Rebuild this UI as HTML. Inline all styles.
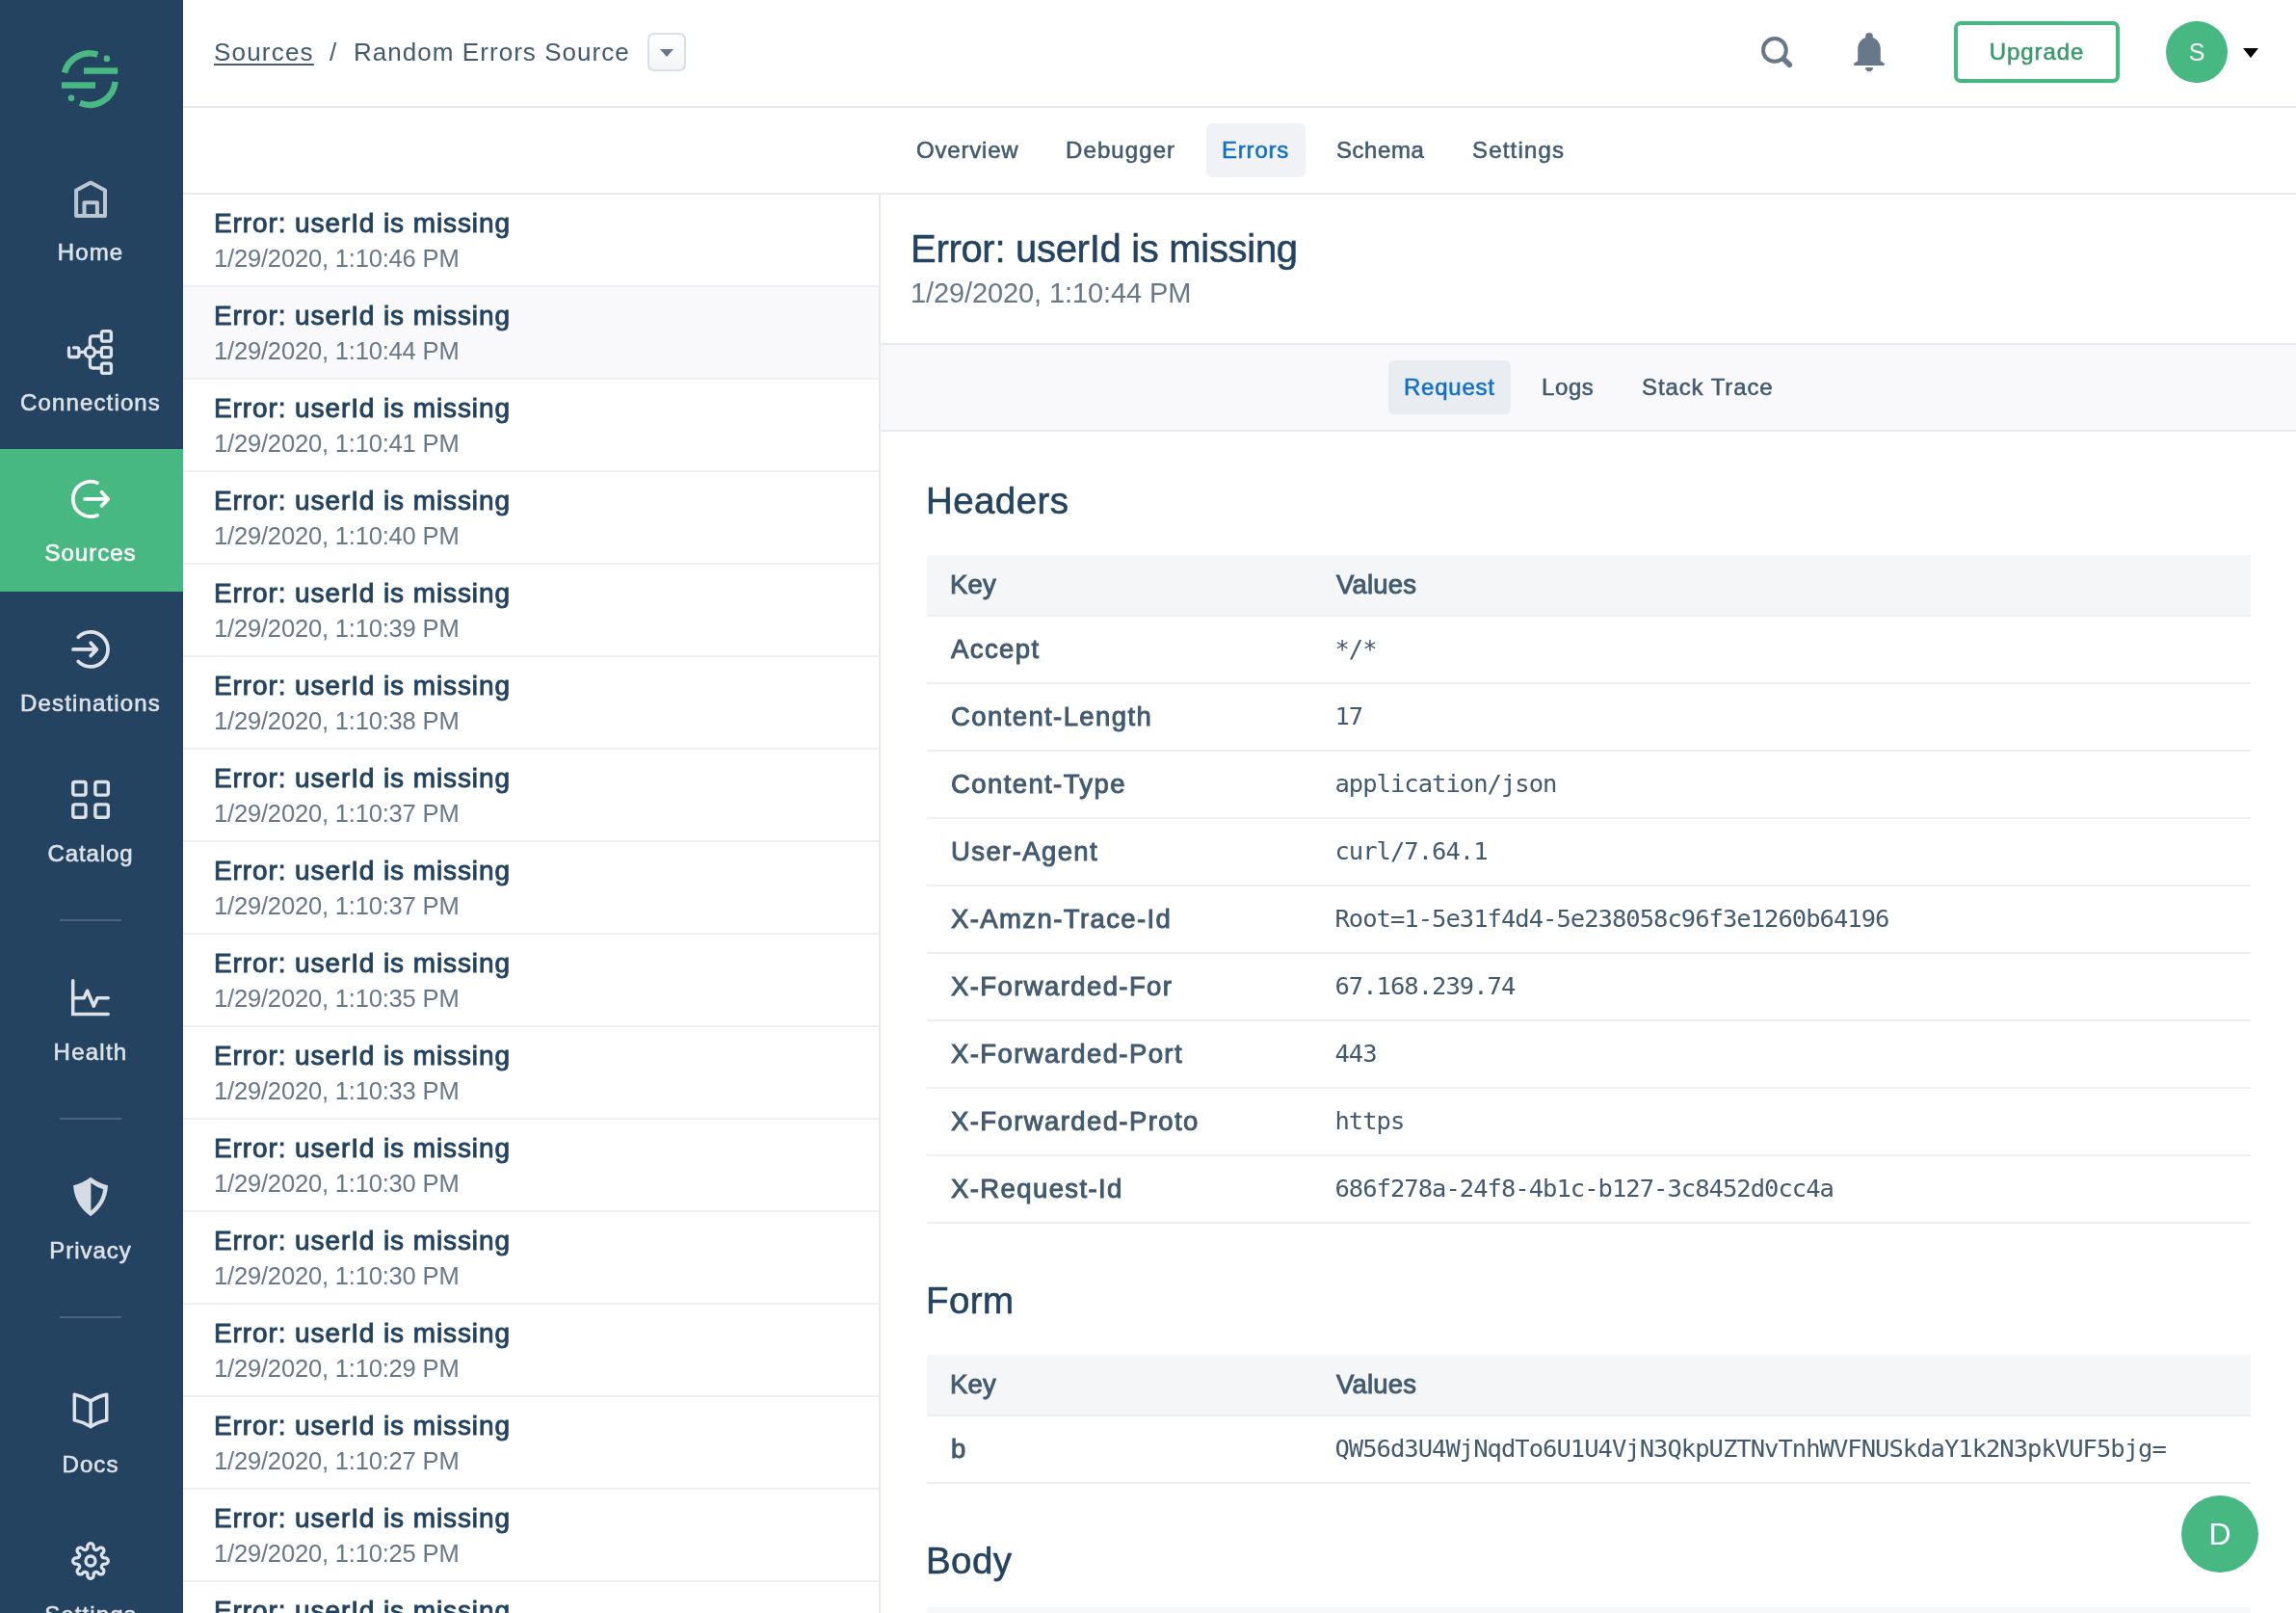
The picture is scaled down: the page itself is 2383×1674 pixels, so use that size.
<!DOCTYPE html>
<html lang="en"><head><meta charset="utf-8"><title>Random Errors Source - Errors</title>
<style>
*{box-sizing:border-box;margin:0;padding:0}
html,body{width:2383px;height:1674px;overflow:hidden;background:#fff}
body{position:relative;font-family:"Liberation Sans",Arial,sans-serif;color:#425a70;-webkit-font-smoothing:antialiased}
#side,#top,#tabs,#list,#det,#fab{will-change:transform}
#side{position:absolute;left:0;top:0;width:190px;height:1674px;background:#234361;overflow:hidden}
#side svg{position:absolute;left:0;top:0}
.nav{position:absolute;left:0;width:190px;height:148px;text-align:center;color:#dde2e8;font-size:24px;font-weight:400;-webkit-text-stroke:0.6px #dde2e8}
.nav span{position:absolute;left:-2px;right:0;top:92px;line-height:32px}
.nav.act{background:#47b881;color:#fff;-webkit-text-stroke-color:#fff}
.sdiv{position:absolute;left:62px;width:64px;height:2px;background:#4a6480}
#top{position:absolute;left:190px;top:0;width:2193px;height:112px;border-bottom:2px solid #e6e9ed;background:#fff}
#crumb span,#crumb a{position:absolute;top:36px;font-size:26px;line-height:36px;color:#425a70;white-space:nowrap}
#crumb a{color:#425a70;text-decoration:underline;text-decoration-thickness:2px;text-underline-offset:3px}
#dd{position:absolute;left:482px;top:34px;width:40px;height:40px;border:2px solid #d9dee4;border-radius:7px;background:linear-gradient(#fff,#f4f5f7)}
#dd i{position:absolute;left:11px;top:15px;border-left:7px solid transparent;border-right:7px solid transparent;border-top:8px solid #66788a}
#upg{position:absolute;left:1838px;top:22px;width:172px;height:64px;border:4px solid #47b881;border-radius:7px;color:#37996b;font-size:24px;line-height:56px;text-align:center;-webkit-text-stroke:0.5px #37996b;letter-spacing:0.9px}
#av{position:absolute;left:2058px;top:22px;width:64px;height:64px;border-radius:50%;background:#47b881;color:#fff;font-size:25px;line-height:64px;text-align:center}
#avc{position:absolute;left:2138px;top:50px;border-left:8.5px solid transparent;border-right:8.5px solid transparent;border-top:10px solid #000}
#tabs{position:absolute;left:190px;top:112px;width:2193px;height:90px;border-bottom:2px solid #e6e9ed;background:#fff}
.tab{position:absolute;top:16px;height:56px;line-height:56px;padding:0 16px;border-radius:6px;font-size:24px;color:#425a70;-webkit-text-stroke:0.55px #425a70;white-space:nowrap}
.tab.on{background:#f1f2f5;color:#1070ca;-webkit-text-stroke-color:#1070ca}
#list{position:absolute;left:190px;top:202px;width:724px;height:1472px;border-right:2px solid #e6e9ed;overflow:hidden;background:#fff}
.row{height:96px;border-bottom:2px solid #edf0f2;padding:12px 0 0 32px}
.row.sel{background:#f9f9fb}
.rt{font-size:28px;line-height:36px;color:#234361;-webkit-text-stroke:0.9px #234361;letter-spacing:0.9px;white-space:nowrap}
.rd{font-size:25.5px;line-height:36px;color:#66788a;letter-spacing:-0.17px;white-space:nowrap;margin-top:0px}
#det{position:absolute;left:914px;top:202px;width:1469px;height:1472px;overflow:hidden;background:#fff}
#dh{height:156px;border-bottom:2px solid #e6e9ed;padding:32px 0 0 31px}
#dh h1{font-size:40px;line-height:48px;font-weight:400;color:#234361;-webkit-text-stroke:0.5px #234361;letter-spacing:-0.3px;white-space:nowrap}
#dh p{font-size:29px;line-height:40px;color:#66788a;letter-spacing:-0.1px;white-space:nowrap;margin-top:2px}
#sub{position:relative;height:90px;border-bottom:2px solid #e6e9ed;background:#f9f9fb}
#sub .tab.on{background:#e9edf1}
#body{padding:0 47px 0 48px}
h2{font-size:38.5px;line-height:48px;font-weight:400;color:#234361;-webkit-text-stroke:0.6px #234361;letter-spacing:0.4px;margin-left:-1px;position:relative;top:2px}
.th,.tr{display:flex;align-items:center}
.th{height:64px;background:#f5f6f7;border-bottom:2px solid #edf0f2;font-size:27.5px;color:#425a70;-webkit-text-stroke:0.95px #425a70;letter-spacing:0.2px}
.tr{height:70px;border-bottom:2px solid #edf0f2}
.th div:first-child,.k{width:425px;padding-left:24px}
.k{font-size:27.5px;color:#425a70;-webkit-text-stroke:0.95px #425a70;letter-spacing:1.4px;text-indent:1px;white-space:nowrap}
.v{font-family:"DejaVu Sans Mono","Liberation Mono",monospace;font-size:25.5px;letter-spacing:-0.98px;color:#425a70;white-space:nowrap;position:relative;top:-1px;left:-1.5px}
#fab{position:absolute;left:2264px;top:1552px;width:80px;height:80px;border-radius:50%;background:#47b881;color:#fff;font-size:32px;line-height:80px;text-align:center}
</style></head><body>
<div id="side">
<div class="nav" style="top:154px"><span style="letter-spacing:1.1px">Home</span></div>
<div class="nav" style="top:310px"><span style="letter-spacing:1.15px">Connections</span></div>
<div class="nav act" style="top:466px"><span style="letter-spacing:1.0px">Sources</span></div>
<div class="nav" style="top:622px"><span style="letter-spacing:1.15px">Destinations</span></div>
<div class="nav" style="top:778px"><span style="letter-spacing:0.9px">Catalog</span></div>
<div class="nav" style="top:984px"><span style="letter-spacing:1.25px">Health</span></div>
<div class="nav" style="top:1190px"><span style="letter-spacing:1.0px">Privacy</span></div>
<div class="nav" style="top:1412px"><span style="letter-spacing:1.05px">Docs</span></div>
<div class="nav" style="top:1568px"><span style="letter-spacing:1.1px">Settings</span></div>

<div class="sdiv" style="top:954px"></div><div class="sdiv" style="top:1160px"></div><div class="sdiv" style="top:1366px"></div>
<svg width="190" height="1674" viewBox="0 0 190 1674" fill="none" stroke-linecap="round" stroke-linejoin="round">
<!-- logo -->
<g stroke="#49b882" stroke-width="6.5" stroke-linecap="butt">
<path d="M67.0 75.5A26.75 26.75 0 0 1 101.3 56.6"/>
<path d="M119.6 84.8A26.75 26.75 0 0 1 83 106.8"/>
<path d="M87 73.5H122.2M63.9 88.5H99"/>
</g>
<circle cx="110.9" cy="60.9" r="3.3" fill="#49b882"/><circle cx="74" cy="101.8" r="3.3" fill="#49b882"/>
<!-- home -->
<g stroke="#bcc6d1" stroke-width="4" stroke-linejoin="round">
<path d="M79.1 224V197.6L94.1 189.4L109 197.6V224Z"/><path d="M87.5 224V210.2H100.9V224"/>
</g>
<g stroke="#dde2e8" stroke-width="3.3">
<!-- connections -->
<rect x="105.4" y="343.7" width="10" height="10.5" rx="2"/><rect x="105.4" y="360.6" width="10" height="10" rx="2"/><rect x="105.4" y="377.2" width="10" height="10.2" rx="2"/>
<circle cx="93.4" cy="365.4" r="5.1"/>
<path d="M71.5 361V368.5Q71.5 370.5 73.5 370.5H79.9Q81.9 370.5 81.9 368.5V362.8Q81.9 360.8 79.9 360.8H76.5"/>
<path d="M83.5 365.4H88.3M98.5 365.4H104"/>
<path d="M93.4 360.3V351.8Q93.4 348.8 96.4 348.8H104"/><path d="M93.4 370.5V379Q93.4 382 96.4 382H104"/>
</g>
<!-- sources -->
<g stroke="#fff" stroke-width="3.7">
<path d="M101 501.1A18.2 18.2 0 1 0 101 534.7"/><path d="M88.1 517.9H111.6M105.6 510.8L112.2 517.9L105.6 525"/>
</g>
<g stroke="#dde2e8" stroke-width="3.7">
<!-- destinations -->
<path d="M81.2 661.3A18 18 0 1 1 81.2 686.5"/><path d="M76 673.9H100M94.2 667.2L100.4 673.9L94.2 680.6"/>
</g>
<g stroke="#dde2e8" stroke-width="3.4">
<rect x="75.8" y="811.5" width="13.2" height="13.6" rx="2"/><rect x="98.9" y="811.5" width="13.4" height="13.6" rx="2"/>
<rect x="75.8" y="834.9" width="13.2" height="13.4" rx="2"/><rect x="98.9" y="834.9" width="13.4" height="13.4" rx="2"/>
</g>
<!-- health -->
<g stroke="#dde2e8" stroke-width="3.5">
<path d="M75.7 1017.7V1052.6H112.2" stroke-linejoin="miter"/>
<path d="M75.7 1035.8H87.2L90.6 1028.2L97.3 1044.2L101.1 1035.8H112.2"/>
</g>
<!-- privacy -->
<path fill="#d5dbe2" fill-rule="evenodd" d="M94.1 1221.8Q103 1228.4 112 1230.3C111.4 1244 104.5 1255 94.1 1262.3C83.7 1255 76.8 1244 76.1 1230.3Q85 1228.4 94.1 1221.8ZM94.4 1227.8Q100.5 1232.2 107.1 1234.2C106 1243.5 101.5 1250.5 94.4 1256.5Z"/>
<!-- docs -->
<g stroke="#dde2e8" stroke-width="3.5" stroke-linejoin="round">
<path d="M94.1 1454Q86 1449 77.3 1447.3V1473.9Q86 1475.6 94.1 1480.6Z"/><path d="M94.1 1454Q102 1449 110.7 1447.3V1473.9Q102 1475.6 94.1 1480.6"/>
</g>
<!-- settings -->
<g stroke="#dde2e8" stroke-width="3.3"><path d="M90.91 1605.68A3.2 3.2 0 1 1 97.09 1605.68A2.8 2.8 0 0 0 101.94 1607.69A3.2 3.2 0 1 1 106.31 1612.06A2.8 2.8 0 0 0 108.32 1616.91A3.2 3.2 0 1 1 108.32 1623.09A2.8 2.8 0 0 0 106.31 1627.94A3.2 3.2 0 1 1 101.94 1632.31A2.8 2.8 0 0 0 97.09 1634.32A3.2 3.2 0 1 1 90.91 1634.32A2.8 2.8 0 0 0 86.06 1632.31A3.2 3.2 0 1 1 81.69 1627.94A2.8 2.8 0 0 0 79.68 1623.09A3.2 3.2 0 1 1 79.68 1616.91A2.8 2.8 0 0 0 81.69 1612.06A3.2 3.2 0 1 1 86.06 1607.69A2.8 2.8 0 0 0 90.91 1605.68Z"/><circle cx="94" cy="1620" r="5"/></g>
</svg>
</div>

<div id="top">
<div id="crumb"><a style="left:32px;letter-spacing:1.2px">Sources</a><span style="left:152px">/</span><span style="left:177px;letter-spacing:1.05px">Random Errors Source</span></div>
<div id="dd"><i></i></div>
<svg style="position:absolute;left:1620px;top:20px" width="160" height="70" viewBox="1810 20 160 70" fill="none">
<circle cx="1841.9" cy="51.9" r="11.9" stroke="#66788a" stroke-width="4"/><path d="M1851.6 61.6L1857.3 67.3" stroke="#66788a" stroke-width="5.6" stroke-linecap="round"/>
<g fill="#66788a"><circle cx="1940" cy="37.8" r="3.9"/>
<path d="M1940 38.5C1947.5 38.5 1951.8 44.5 1951.8 51V62.5C1951.8 63.6 1953.4 64.4 1955 65.2C1956.6 66.2 1956 68.1 1954.4 68.1H1925.6C1924 68.1 1923.4 66.2 1925 65.2C1926.6 64.4 1928.2 63.6 1928.2 62.5V51C1928.2 44.5 1932.5 38.5 1940 38.5Z"/>
<path d="M1935.8 70H1944.2A4.2 4.2 0 0 1 1935.8 70Z"/></g>
</svg>
<div id="upg">Upgrade</div>
<div id="av">S</div><div id="avc"></div>
</div>

<div id="tabs">
<div class="tab" style="left:745px;letter-spacing:.8px">Overview</div><div class="tab" style="left:900px;letter-spacing:1.1px">Debugger</div><div class="tab on" style="left:1062px;width:103px;letter-spacing:.8px">Errors</div><div class="tab" style="left:1181px;letter-spacing:.55px">Schema</div><div class="tab" style="left:1322px;letter-spacing:1.2px">Settings</div>
</div>

<div id="list">
<div class="row"><div class="rt">Error: userId is missing</div><div class="rd">1/29/2020, 1:10:46 PM</div></div>
<div class="row sel"><div class="rt">Error: userId is missing</div><div class="rd">1/29/2020, 1:10:44 PM</div></div>
<div class="row"><div class="rt">Error: userId is missing</div><div class="rd">1/29/2020, 1:10:41 PM</div></div>
<div class="row"><div class="rt">Error: userId is missing</div><div class="rd">1/29/2020, 1:10:40 PM</div></div>
<div class="row"><div class="rt">Error: userId is missing</div><div class="rd">1/29/2020, 1:10:39 PM</div></div>
<div class="row"><div class="rt">Error: userId is missing</div><div class="rd">1/29/2020, 1:10:38 PM</div></div>
<div class="row"><div class="rt">Error: userId is missing</div><div class="rd">1/29/2020, 1:10:37 PM</div></div>
<div class="row"><div class="rt">Error: userId is missing</div><div class="rd">1/29/2020, 1:10:37 PM</div></div>
<div class="row"><div class="rt">Error: userId is missing</div><div class="rd">1/29/2020, 1:10:35 PM</div></div>
<div class="row"><div class="rt">Error: userId is missing</div><div class="rd">1/29/2020, 1:10:33 PM</div></div>
<div class="row"><div class="rt">Error: userId is missing</div><div class="rd">1/29/2020, 1:10:30 PM</div></div>
<div class="row"><div class="rt">Error: userId is missing</div><div class="rd">1/29/2020, 1:10:30 PM</div></div>
<div class="row"><div class="rt">Error: userId is missing</div><div class="rd">1/29/2020, 1:10:29 PM</div></div>
<div class="row"><div class="rt">Error: userId is missing</div><div class="rd">1/29/2020, 1:10:27 PM</div></div>
<div class="row"><div class="rt">Error: userId is missing</div><div class="rd">1/29/2020, 1:10:25 PM</div></div>
<div class="row"><div class="rt">Error: userId is missing</div><div class="rd">1/29/2020, 1:10:23 PM</div></div>
</div>

<div id="det">
<div id="dh"><h1>Error: userId is missing</h1><p>1/29/2020, 1:10:44 PM</p></div>
<div id="sub"><div class="tab on" style="left:527px;width:127px;letter-spacing:.75px">Request</div><div class="tab" style="left:670px;letter-spacing:.6px">Logs</div><div class="tab" style="left:774px;letter-spacing:.9px">Stack Trace</div></div>
<div id="body">
<h2 style="margin-top:46px">Headers</h2>
<div class="th" style="margin-top:34px"><div>Key</div><div>Values</div></div>
<div class="tr"><div class="k">Accept</div><div class="v">*/*</div></div>
<div class="tr"><div class="k">Content-Length</div><div class="v">17</div></div>
<div class="tr"><div class="k">Content-Type</div><div class="v">application/json</div></div>
<div class="tr"><div class="k">User-Agent</div><div class="v">curl/7.64.1</div></div>
<div class="tr"><div class="k">X-Amzn-Trace-Id</div><div class="v">Root=1-5e31f4d4-5e238058c96f3e1260b64196</div></div>
<div class="tr"><div class="k">X-Forwarded-For</div><div class="v">67.168.239.74</div></div>
<div class="tr"><div class="k">X-Forwarded-Port</div><div class="v">443</div></div>
<div class="tr"><div class="k">X-Forwarded-Proto</div><div class="v">https</div></div>
<div class="tr"><div class="k">X-Request-Id</div><div class="v">686f278a-24f8-4b1c-b127-3c8452d0cc4a</div></div>

<h2 style="margin-top:54px">Form</h2>
<div class="th" style="margin-top:34px"><div>Key</div><div>Values</div></div>
<div class="tr"><div class="k">b</div><div class="v">QW56d3U4WjNqdTo6U1U4VjN3QkpUZTNvTnhWVFNUSkdaY1k2N3pkVUF5bjg=</div></div>
<h2 style="margin-top:54px">Body</h2>
<div class="th" style="margin-top:26px;background:#f7f8fa;border:0"></div>
</div>
</div>
<div id="fab">D</div>
</body></html>
